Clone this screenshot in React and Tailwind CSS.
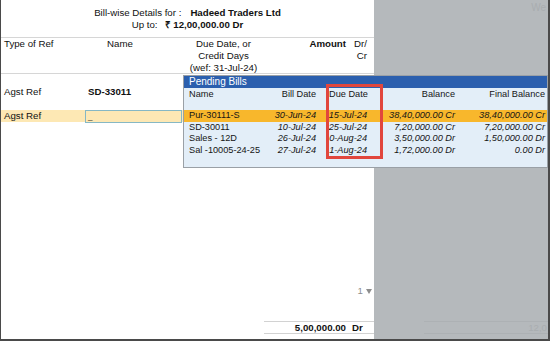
const bills = [
  { name: "Pur-30111-S", billDate: "30-Jun-24", due: "15-Jul-24", bal: "38,40,000.00 Cr", fin: "38,40,000.00 Cr", active: true },
  { name: "SD-30011", billDate: "10-Jul-24", due: "25-Jul-24", bal: "7,20,000.00 Cr", fin: "7,20,000.00 Cr" },
  { name: "Sales - 12D", billDate: "26-Jul-24", due: "0-Aug-24", bal: "3,50,000.00 Dr", fin: "1,50,000.00 Dr" },
  { name: "Sal -10005-24-25", billDate: "27-Jul-24", due: "1-Aug-24", bal: "1,72,000.00 Dr", fin: "0.00 Dr" },
];

function PendingBills() {
  return (
    <div className="absolute left-[182px] top-[75px] w-[365px] border border-[#9aa0a6] bg-[#e3eef8] text-[9.2px] text-[#151515]">
      <div className="h-[12px] bg-[#2b5fae] pl-[5px] text-[10px] leading-[12px] text-white">Pending Bills</div>

      {/* column titles */}
      <div className="grid h-[12px] grid-cols-[67px_62px_68px_70px_90px] pl-[5px] leading-[12px]">
        <div>Name</div>
        <div className="pr-[2px] text-right">Bill Date</div>
        <div className="pl-[11px]">Due Date</div>
        <div className="pr-[1px] text-right">Balance</div>
        <div className="pr-[1px] text-right">Final Balance</div>
      </div>
      <div className="h-[10px]" />

      {bills.map((b) => (
        <div
          key={b.name}
          className={
            "grid h-[11.7px] grid-cols-[67px_62px_68px_70px_90px] pl-[5px] leading-[11.7px] " +
            (b.active ? "bg-[#f8b72c]" : "")
          }
        >
          <div className="whitespace-nowrap">{b.name}</div>
          <div className="pr-[2px] text-right italic">{b.billDate}</div>
          <div className="whitespace-nowrap pr-[19px] text-right italic">{b.due}</div>
          <div className="whitespace-nowrap pr-[1px] text-right italic">{b.bal}</div>
          <div className="whitespace-nowrap pr-[1px] text-right italic">{b.fin}</div>
        </div>
      ))}
      <div className="h-[10px]" />
    </div>
  );
}

export default function App() {
  return (
    <div className="relative flex h-[341px] w-[550px] overflow-hidden border-b-2 border-l border-r-2 border-[#4a4a4a] font-['Liberation_Sans',Arial,sans-serif] text-[9.7px] text-[#111]">
      {/* main voucher panel */}
      <div className="flex h-full w-[373px] shrink-0 flex-col bg-white">
        <div className="h-[38px] border-b border-[#d6d6d6] pt-[7px] text-center leading-[12px]">
          <div>
            Bill-wise Details for :<span className="ml-[9px] font-bold">Hadeed Traders Ltd</span>
          </div>
          <div>
            Up to:<span className="ml-[7px] font-bold">₹ 12,00,000.00 Dr</span>
          </div>
        </div>

        <div className="grid h-[36px] grid-cols-[81px_76px_131px_58px_22px] border-b border-[#d6d6d6] leading-[12px]">
          <div className="pl-[3px]">Type of Ref</div>
          <div className="text-center">Name</div>
          <div className="text-center">
            Due Date, or
            <br />
            Credit Days
            <br />
            (wef: 31-Jul-24)
          </div>
          <div className="pr-[1px] text-right font-bold">Amount</div>
          <div className="pr-[2px] text-right">
            Dr/
            <br />
            Cr
          </div>
        </div>

        <div className="mt-[12px] flex h-[12px] leading-[12px]">
          <div className="w-[84px] pl-[3px]">Agst Ref</div>
          <div className="pl-[3px] font-bold">SD-33011</div>
        </div>

        <div className="mt-[12px] flex h-[12px] bg-[#fde8b4] leading-[12px]">
          <div className="w-[84px] pl-[3px]">Agst Ref</div>
          <div className="relative h-[13px] w-[97px] border border-[#86b8c4] bg-[#fde8b4]">
            <span className="absolute left-[2px] top-[1px] text-[8px] leading-[10px]">_</span>
          </div>
        </div>

        <div className="flex-1" />

        <div className="flex h-[12px] items-center justify-end gap-[3px] pr-[2px] leading-[12px] text-[#8d8d8d]">
          <span>1</span>
          <svg width="6" height="5" viewBox="0 0 6 5">
            <path d="M0 0h6L3 5z" fill="#8d8d8d" />
          </svg>
        </div>
        <div className="ml-auto mt-[24px] flex h-[13px] w-[110px] border-y border-[#d2d2d2] font-bold leading-[11px]">
          <span className="w-[82px] text-right">5,00,000.00</span>
          <span className="ml-[6px]">Dr</span>
        </div>
        <div className="h-[5px]" />
      </div>

      {/* inactive right panel */}
      <div className="flex flex-1 flex-col overflow-hidden bg-[#b5b9bc] text-[#a9adb0]">
        <div className="pr-[2px] pt-[2px] text-right text-[10px] leading-[12px]">We</div>
        <div className="flex-1" />
        <div className="ml-[50px] h-[13px] border-y border-[#adb1b4] pr-[1px] text-right leading-[11px]">12,0</div>
        <div className="h-[5px]" />
      </div>

      <PendingBills />

      {/* highlight around due dates */}
      <div className="absolute left-[325px] top-[84px] h-[75px] w-[57px] border-[3px] border-[#e1463d]" />
    </div>
  );
}
